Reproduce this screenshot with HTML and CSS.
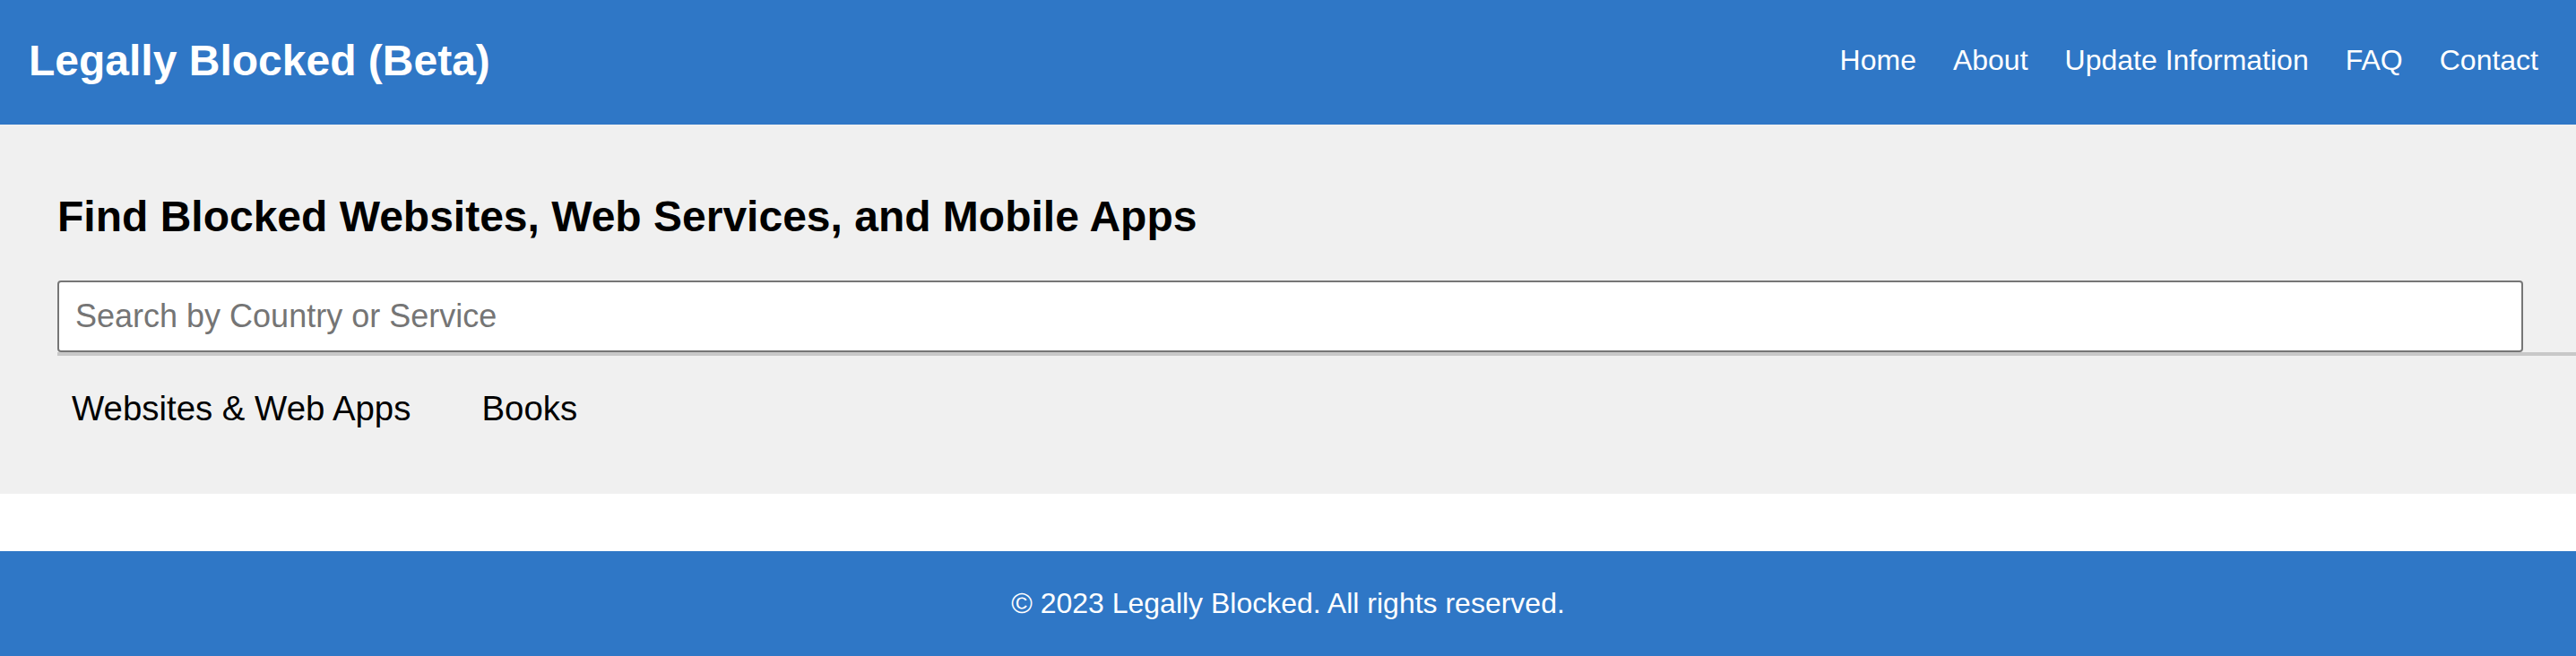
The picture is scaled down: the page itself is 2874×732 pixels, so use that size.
FILE: index.html
```html
<!DOCTYPE html>
<html lang="en">
<head>
<meta charset="utf-8">
<title>Legally Blocked (Beta)</title>
<link rel="stylesheet" href="styles.css">
</head>
<body>
<header class="site-header">
  <h1 class="brand">Legally Blocked (Beta)</h1>
  <nav class="nav">
    <a href="#" class="nav-link">Home</a>
    <a href="#" class="nav-link">About</a>
    <a href="#" class="nav-link">Update Information</a>
    <a href="#" class="nav-link">FAQ</a>
    <a href="#" class="nav-link">Contact</a>
  </nav>
</header>
<main class="search-section">
  <h2 class="search-title">Find Blocked Websites, Web Services, and Mobile Apps</h2>
  <input class="search-input" type="text" placeholder="Search by Country or Service">
  <div class="tabs">
    <button class="tab" type="button">Websites &amp; Web Apps</button>
    <button class="tab" type="button">Books</button>
  </div>
</main>
<footer class="site-footer">
  <p class="footer-text">&copy; 2023 Legally Blocked. All rights reserved.</p>
</footer>
</body>
</html>
```

FILE: styles.css
```css
* {
  box-sizing: border-box;
}

html, body {
  margin: 0;
  padding: 0;
}

body {
  font-family: "Liberation Sans", Arial, Helvetica, sans-serif;
  color: #000;
  background: #fff;
  min-height: 100vh;
  display: flex;
  flex-direction: column;
}

.site-header {
  background: #2f77c6;
  color: #fff;
  height: 139px;
  padding: 40px 42px 44px 32px;
  display: flex;
  align-items: center;
  justify-content: space-between;
}

.brand {
  margin: 0;
  font-size: 48px;
  font-weight: bold;
  line-height: normal;
}

.nav {
  display: flex;
  gap: 41px;
}

.nav-link {
  color: #fff;
  text-decoration: none;
  font-size: 32px;
  line-height: normal;
}

.search-section {
  background: #f0f0f0;
  padding: 75px 59px 73px 64px;
  display: flex;
  flex-direction: column;
  align-items: stretch;
}

.search-title {
  margin: 0 0 44px;
  font-size: 48px;
  font-weight: bold;
  line-height: 55px;
}

.search-input {
  height: 80px;
  width: 100%;
  border: 2px solid #767676;
  border-radius: 4px;
  background: #fff;
  padding: 0 18px;
  font-family: inherit;
  font-size: 36px;
  color: #000;
  outline: none;
}

.search-input::placeholder {
  color: #757575;
}

.tabs {
  margin-right: -59px;
  border-top: 4px solid #c8c8c8;
  display: flex;
  gap: 47px;
}

.tab {
  background: none;
  border: none;
  padding: 37px 16px 0;
  font-family: inherit;
  font-size: 38.4px;
  line-height: 44px;
  color: #000;
  cursor: pointer;
}

.site-footer {
  margin-top: auto;
  background: #2f77c6;
  color: #fff;
  padding: 40px 20px;
  text-align: center;
}

.footer-text {
  margin: 0;
  font-size: 32px;
  line-height: 37px;
}
```
